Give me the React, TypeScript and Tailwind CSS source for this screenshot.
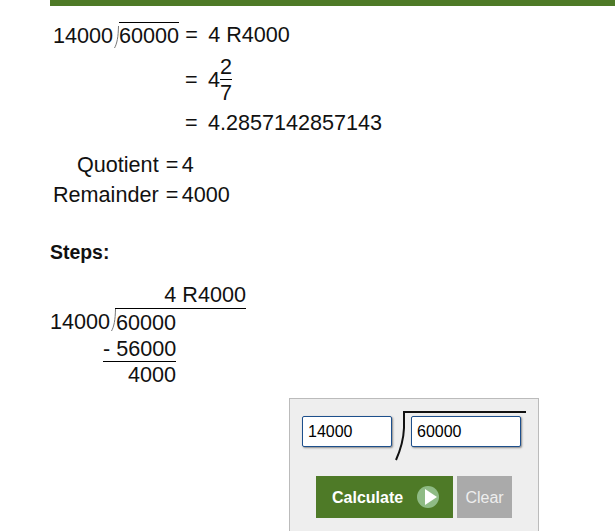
const Slash = ({ h }: { h: number }) => (
  <svg width="6" height={h} viewBox={`0 0 6 ${h}`} className="block shrink-0">
    <path d={`M5.5 0 C5.3 ${h * 0.5} 4 ${h * 0.8} 1.5 ${h}`} fill="none" stroke="#777" strokeWidth="1" />
  </svg>
);

const App = () => {
  return (
    <div className="h-[531px] w-[615px] overflow-hidden bg-white pl-[50px] font-['Liberation_Sans',sans-serif] text-[21.6px] leading-[25px] text-[#111]">
      <div className="h-[6px] bg-[#4e7a27]" />

      <div className="mt-[16px] flex h-[26px] items-end pl-[3px]">
        <span>14000</span>
        <Slash h={22} />
        <span className="border-t border-black">60000</span>
        <span className="mb-[1px] ml-[6px] w-[23px]">=</span>
        <span className="mb-[1px]">4 R4000</span>
      </div>

      <div className="mt-[6px] flex h-[50px] items-center pl-[135px]">
        <span className="w-[23px]">=</span>
        <span>4</span>
        <div className="flex flex-col items-center">
          <span className="border-b border-black">2</span>
          <span>7</span>
        </div>
      </div>

      <div className="mt-[6px] flex h-[25px] items-center pl-[135px]">
        <span className="w-[23px]">=</span>
        <span>4.2857142857143</span>
      </div>

      <div className="mt-[17px] flex h-[25px] items-center pl-[27px]">
        <span>Quotient</span>
        <span className="ml-[7px] w-[16px]">=</span>
        <span>4</span>
      </div>
      <div className="mt-[5px] flex h-[25px] items-center pl-[3px]">
        <span>Remainder</span>
        <span className="ml-[7px] w-[16px]">=</span>
        <span>4000</span>
      </div>

      <div className="mt-[34px] text-[19.44px] font-bold leading-[22px]">Steps:</div>

      <div className="ml-[65px] mt-[20px] h-[26px] w-[131px] border-b border-black text-right leading-[24px]">4 R4000</div>
      <div className="flex h-[26px] items-start">
        <span>14000</span>
        <Slash h={22} />
        <span className="mt-[1px]">60000</span>
      </div>
      <div className="w-[126px] text-right">
        <div className="ml-auto h-[27px] w-[73px] whitespace-nowrap border-b border-black leading-[28px]">- 56000</div>
        <div>4000</div>
      </div>

      <div className="ml-[239px] mt-[11px] h-[140px] w-[250px] border border-[#bbb] bg-[#eee] pl-[12px] pt-[12px]">
        <div className="flex items-start">
          <input
            readOnly
            value="14000"
            className="mt-[5px] h-[31px] w-[90px] rounded-[2px] border border-[#1d4f8c] bg-white pl-[5px] text-[16px] text-black shadow-[1px_1px_2px_#888] outline-none"
          />
          <svg width="10" height="50" viewBox="0 0 10 50" className="ml-[3px] block shrink-0">
            <path d="M9 0 L9 17 C8.5 29 5 40 1 49" fill="none" stroke="#111" strokeWidth="2" />
          </svg>
          <div className="w-[121px] border-t-2 border-[#111] pl-[6px] pt-[3px]">
            <input
              readOnly
              value="60000"
              className="h-[31px] w-[110px] rounded-[2px] border border-[#1d4f8c] bg-white pl-[5px] text-[16px] text-black shadow-[1px_1px_2px_#888] outline-none"
            />
          </div>
        </div>
        <div className="mt-[15px] flex items-start gap-[4px] pl-[14px]">
          <div className="flex h-[42px] w-[137px] items-center bg-[#4e7a27] pl-[16px] text-[16px] font-bold text-white">
            <span>Calculate</span>
            <svg width="22" height="22" viewBox="0 0 22 22" className="ml-[14px] block">
              <circle cx="11" cy="11" r="11" fill="#8fbb85" />
              <path d="M8 3 L20 11 L8 19 Z" fill="#fff" />
            </svg>
          </div>
          <div className="flex h-[42px] w-[55px] items-center justify-center bg-[#aaa] text-[16px] text-[#eee]">Clear</div>
        </div>
      </div>
    </div>
  );
};

export default App;
